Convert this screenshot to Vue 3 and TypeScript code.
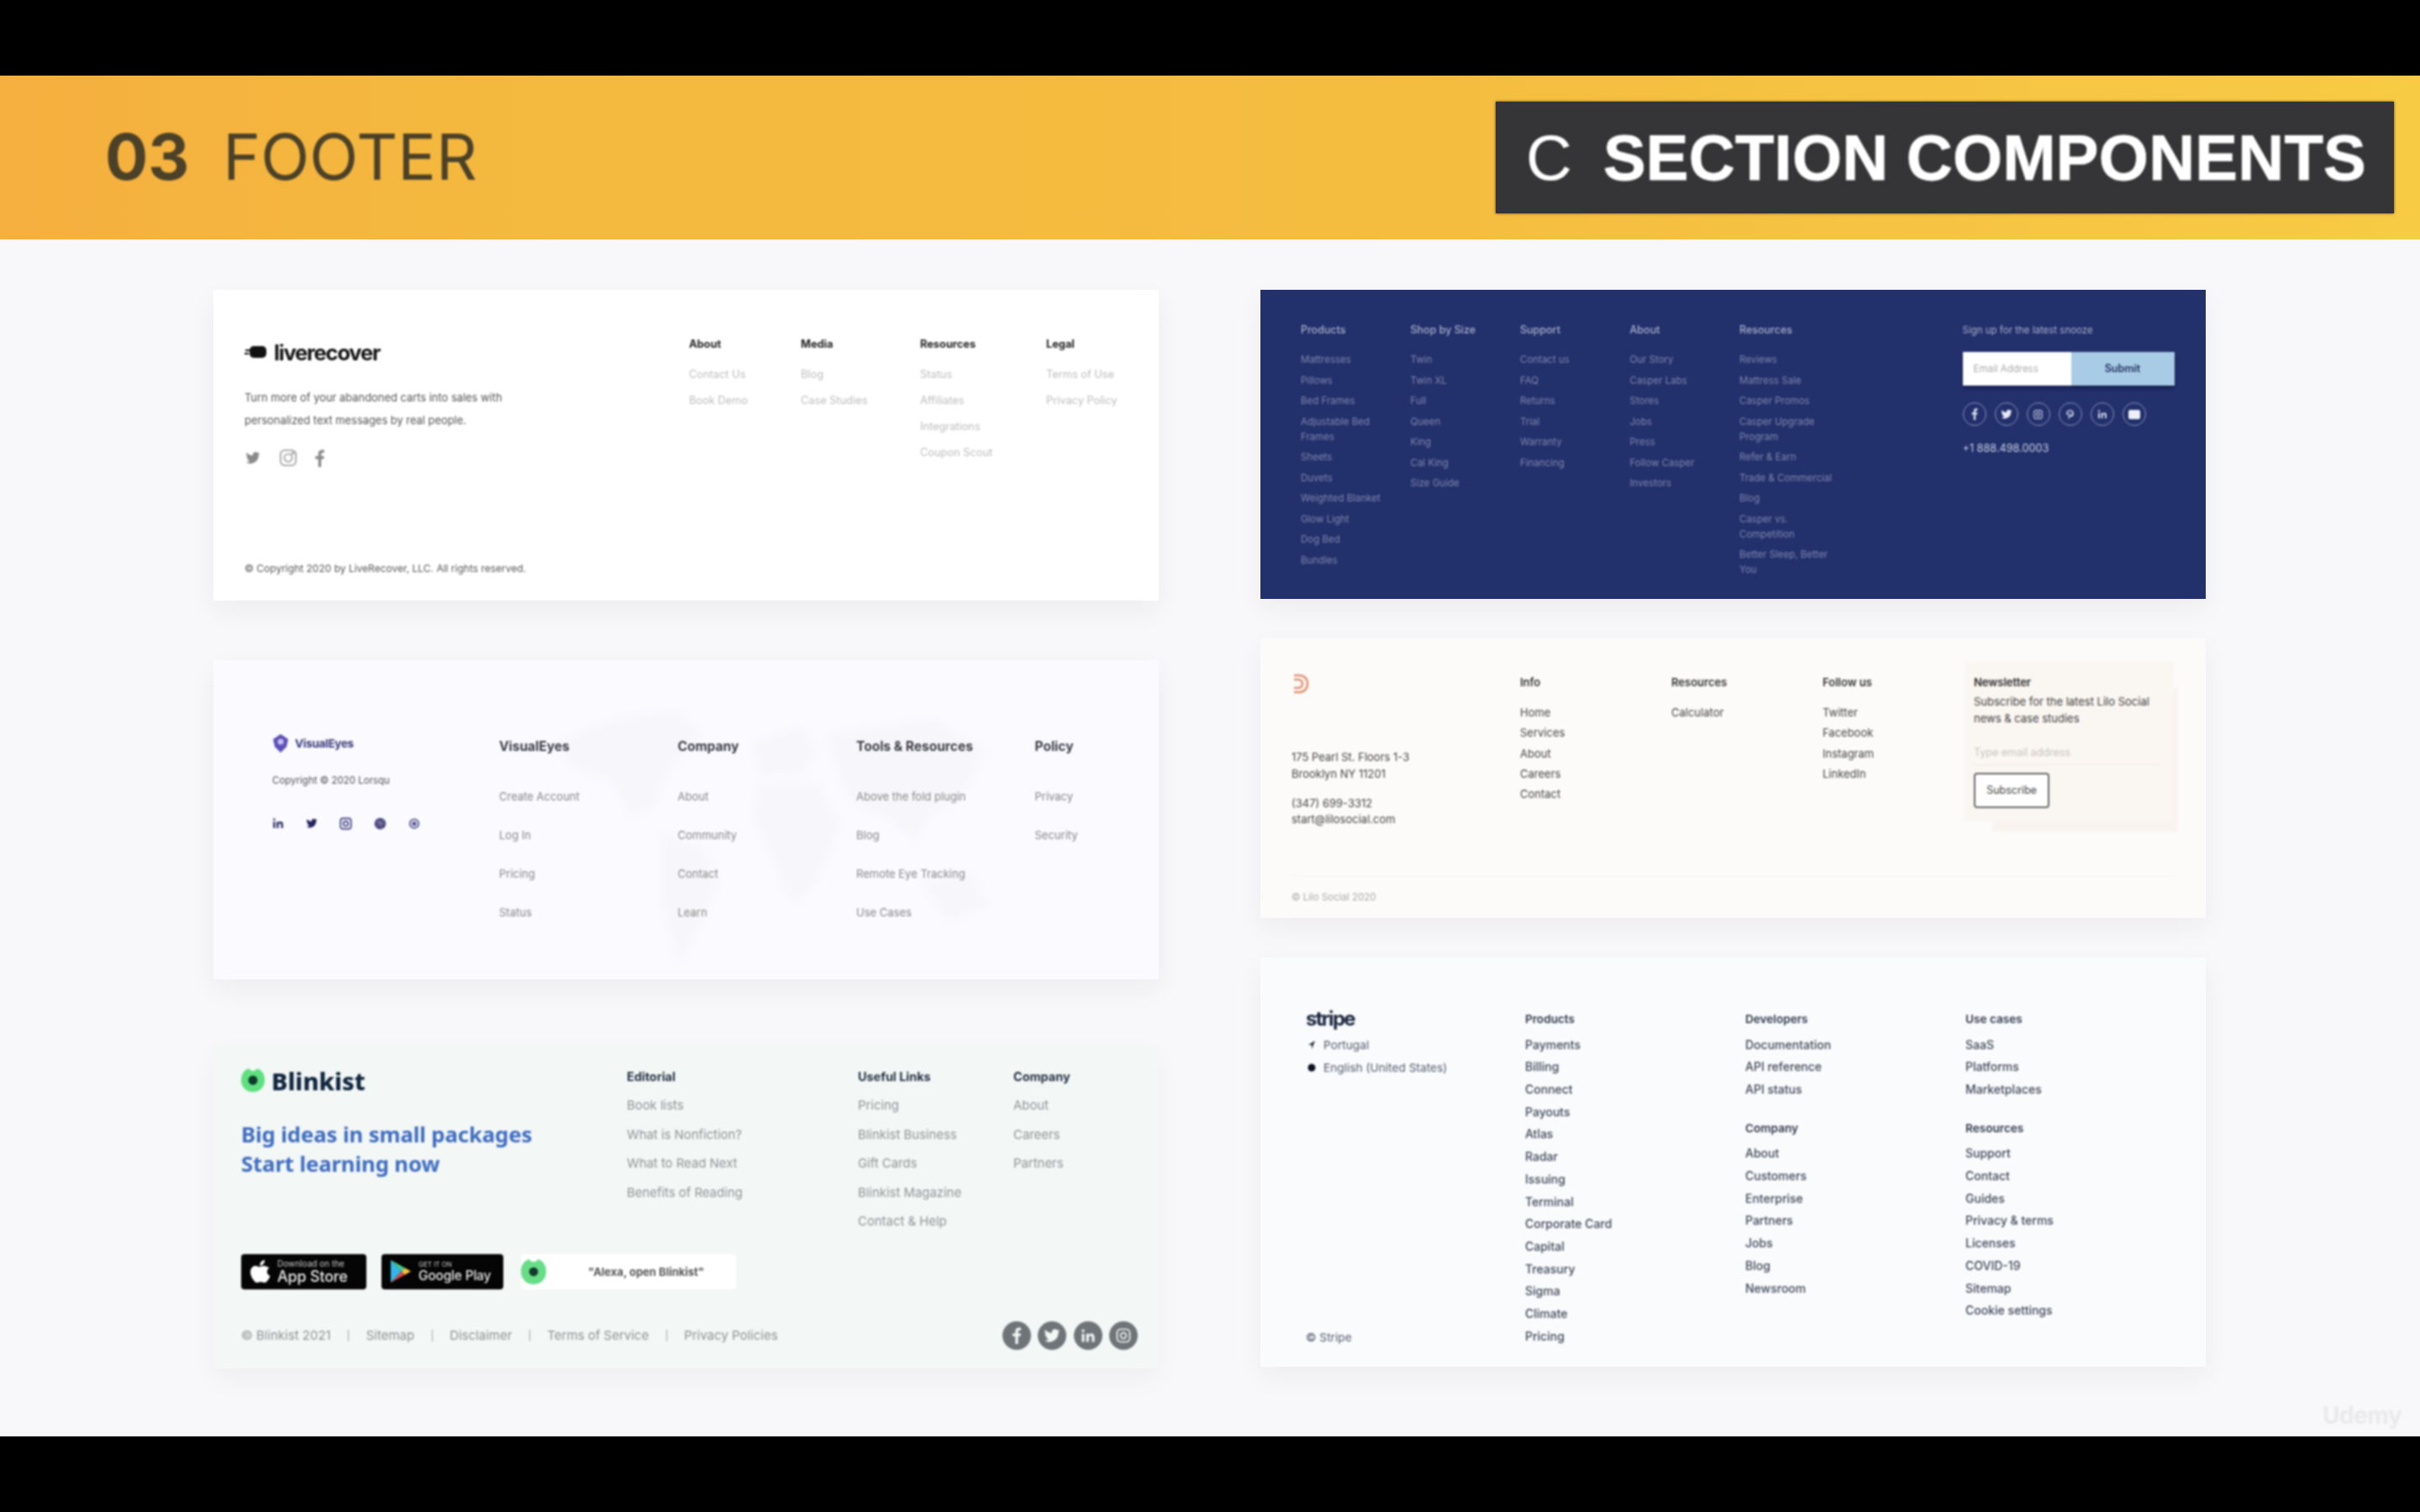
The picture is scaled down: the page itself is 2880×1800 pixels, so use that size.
<script setup lang="ts">
interface Col { title: string; items: string[] }
const c1: Col[] = [
  { title: 'About', items: ['Contact Us', 'Book Demo'] },
  { title: 'Media', items: ['Blog', 'Case Studies'] },
  { title: 'Resources', items: ['Status', 'Affiliates', 'Integrations', 'Coupon Scout'] },
  { title: 'Legal', items: ['Terms of Use', 'Privacy Policy'] },
]
const c2: Col[] = [
  { title: 'VisualEyes', items: ['Create Account', 'Log In', 'Pricing', 'Status'] },
  { title: 'Company', items: ['About', 'Community', 'Contact', 'Learn'] },
  { title: 'Tools & Resources', items: ['Above the fold plugin', 'Blog', 'Remote Eye Tracking', 'Use Cases'] },
  { title: 'Policy', items: ['Privacy', 'Security'] },
]
const c3: Col[] = [
  { title: 'Editorial', items: ['Book lists', 'What is Nonfiction?', 'What to Read Next', 'Benefits of Reading'] },
  { title: 'Useful Links', items: ['Pricing', 'Blinkist Business', 'Gift Cards', 'Blinkist Magazine', 'Contact & Help'] },
  { title: 'Company', items: ['About', 'Careers', 'Partners'] },
]
const legal = ['Sitemap', 'Disclaimer', 'Terms of Service', 'Privacy Policies']
const r1: Col[] = [
  { title: 'Products', items: ['Mattresses', 'Pillows', 'Bed Frames', 'Adjustable Bed\nFrames', 'Sheets', 'Duvets', 'Weighted Blanket', 'Glow Light', 'Dog Bed', 'Bundles'] },
  { title: 'Shop by Size', items: ['Twin', 'Twin XL', 'Full', 'Queen', 'King', 'Cal King', 'Size Guide'] },
  { title: 'Support', items: ['Contact us', 'FAQ', 'Returns', 'Trial', 'Warranty', 'Financing'] },
  { title: 'About', items: ['Our Story', 'Casper Labs', 'Stores', 'Jobs', 'Press', 'Follow Casper', 'Investors'] },
  { title: 'Resources', items: ['Reviews', 'Mattress Sale', 'Casper Promos', 'Casper Upgrade\nProgram', 'Refer & Earn', 'Trade & Commercial', 'Blog', 'Casper vs.\nCompetition', 'Better Sleep, Better\nYou'] },
]
const r2: Col[] = [
  { title: 'Info', items: ['Home', 'Services', 'About', 'Careers', 'Contact'] },
  { title: 'Resources', items: ['Calculator'] },
  { title: 'Follow us', items: ['Twitter', 'Facebook', 'Instagram', 'LinkedIn'] },
]
const s1: Col = { title: 'Products', items: ['Payments', 'Billing', 'Connect', 'Payouts', 'Atlas', 'Radar', 'Issuing', 'Terminal', 'Corporate Card', 'Capital', 'Treasury', 'Sigma', 'Climate', 'Pricing'] }
const s2: Col[] = [
  { title: 'Developers', items: ['Documentation', 'API reference', 'API status'] },
  { title: 'Company', items: ['About', 'Customers', 'Enterprise', 'Partners', 'Jobs', 'Blog', 'Newsroom'] },
]
const s3: Col[] = [
  { title: 'Use cases', items: ['SaaS', 'Platforms', 'Marketplaces'] },
  { title: 'Resources', items: ['Support', 'Contact', 'Guides', 'Privacy & terms', 'Licenses', 'COVID-19', 'Sitemap', 'Cookie settings'] },
]
</script>

<template>
  <div class="stage">
    <div class="bar"></div>
    <header class="banner">
      <div class="heading"><b>03</b><span>FOOTER</span></div>
      <div class="tag"><span class="tag-c">C</span><b>SECTION COMPONENTS</b></div>
    </header>
    <main class="content">
      <section class="column col-left">
        <article class="card a1">
          <div class="row">
            <div class="brand">
              <div class="lr-logo">
                <svg width="28" height="18" viewBox="0 0 28 18"><path d="M1 7h5M0 11h5" stroke="#111" stroke-width="2"/><rect x="6" y="2" width="20" height="14" rx="5" fill="#111"/></svg>
                <span>liverecover</span>
              </div>
              <p class="lr-desc">Turn more of your abandoned carts into sales with<br>personalized text messages by real people.</p>
              <div class="lr-social">
                <svg width="20" height="18" viewBox="0 0 24 24" fill="#8a8a8a"><path d="M23 5c-.8.4-1.7.6-2.6.7.9-.6 1.6-1.4 2-2.5-.9.5-1.9.9-2.9 1.100A4.600 4.600 0 0 0 11.700 8.500 13 13 0 0 1 2.300 3.700a4.600 4.600 0 0 0 1.400 6.100c-.7 0-1.400-.2-2-.6 0 2.200 1.600 4.100 3.700 4.600-.7.200-1.400.2-2.100.1.600 1.800 2.300 3.100 4.300 3.200A9.200 9.200 0 0 1 1 19a13 13 0 0 0 20-11.600c.8-.6 1.500-1.400 2-2.400z"/></svg>
                <svg width="22" height="22" viewBox="0 0 24 24" fill="none" stroke="#a5a5a5" stroke-width="2"><rect x="2" y="2" width="20" height="20" rx="6"/><circle cx="12" cy="12" r="5"/><circle cx="18" cy="6" r="1" fill="#a5a5a5"/></svg>
                <svg width="11" height="21" viewBox="0 0 12 24" fill="#8a8a8a"><path d="M8 24V13h3.500l.5-4H8V6.500C8 5.300 8.400 4.500 10 4.500h2V.800C11.600.700 10.400.600 9.100.600 6.300.600 4 2.300 4 5.800V9H0v4h4v11z"/></svg>
              </div>
            </div>
            <div v-for="c in c1" :key="c.title" class="lr-col">
              <h4>{{ c.title }}</h4>
              <a v-for="i in c.items" :key="i">{{ i }}</a>
            </div>
          </div>
          <p class="lr-copy">© Copyright 2020 by LiveRecover, LLC. All rights reserved.</p>
        </article>

        <article class="card a2">
          <svg class="map" viewBox="0 0 600 340" fill="#f7f7fb"><path d="M40 60l70-30 80-10 30 30-40 40-20 50-30 10-20-40-50-20zM170 170l50 20 20 40-30 70-20 30-20-70zM280 60l60-20 20 30-20 30-50 0zM290 110l70 0 30 50-30 70-30 30-30-70-20-40zM370 50l130-20 70 40-30 50-40 30-20 30-40-30-40-20zM490 230l60-10 20 40-50 20z"/></svg>
          <div class="row">
            <div class="ve-brand">
              <div class="ve-logo">
                <svg width="20" height="24" viewBox="0 0 20 24"><path d="M10 1l9 6-2 9-7 7-7-7-2-9z" fill="#5d50b8"/><circle cx="10" cy="10" r="3.500" fill="#c6c1f0"/></svg>
                <span>VisualEyes</span>
              </div>
              <p>Copyright © 2020 Lorsqu</p>
              <div class="ve-social">
                <svg width="14" height="14" viewBox="0 0 24 24" fill="#2a2860"><path d="M2 9h4v13H2zM4 2a2.300 2.300 0 1 1 0 4.600A2.300 2.300 0 0 1 4 2zM9 9h4v2c1-1.500 2.400-2.300 4.200-2.300 3.400 0 4.800 2.200 4.800 6V22h-4v-6.500c0-2-.6-3.200-2.200-3.200-1.900 0-2.800 1.300-2.800 3.400V22H9z"/></svg>
                <svg width="14" height="14" viewBox="0 0 24 24" fill="#26245e"><path d="M23 5c-.8.4-1.700.6-2.600.7.900-.6 1.600-1.400 2-2.500-.9.500-1.900.9-2.900 1.100A4.600 4.600 0 0 0 11.700 8.500 13 13 0 0 1 2.300 3.700a4.600 4.600 0 0 0 1.400 6.100c-.7 0-1.400-.2-2-.6 0 2.200 1.600 4.100 3.700 4.600-.7.200-1.400.2-2.100.1.600 1.800 2.300 3.100 4.300 3.200A9.200 9.200 0 0 1 1 19a13 13 0 0 0 20-11.600c.8-.6 1.500-1.400 2-2.400z"/></svg>
                <svg width="15" height="15" viewBox="0 0 24 24" fill="none" stroke="#55528f" stroke-width="3"><rect x="2" y="2" width="20" height="20" rx="5"/><circle cx="12" cy="12" r="4.500"/></svg>
                <svg width="15" height="15" viewBox="0 0 24 24"><circle cx="12" cy="12" r="11" fill="#46437f"/><path d="M8 4c3 4 6 11 7 17M3 10c6 0 13-1 17-5M4 18c4-5 11-7 18-5" stroke="#bbb" stroke-width="1" fill="none"/></svg>
                <svg width="14" height="15" viewBox="0 0 24 24" fill="none" stroke="#55528f" stroke-width="3"><circle cx="12" cy="12" r="9"/><circle cx="12" cy="12" r="3" fill="#55528f"/></svg>
              </div>
            </div>
            <div v-for="c in c2" :key="c.title" class="ve-col">
              <h4>{{ c.title }}</h4>
              <a v-for="i in c.items" :key="i">{{ i }}</a>
            </div>
          </div>
        </article>

        <article class="card a3">
          <div class="row">
            <div class="bl-brand">
              <div class="bl-logo">
                <svg width="28" height="30" viewBox="0 0 28 30"><path d="M14 4c-2 0-3.500-1-5-3C3 3 0 8 0 15c0 8 6 14 14 14s14-6 14-14c0-7-3-12-9-14-1.500 2-3 3-5 3z" fill="#5ee07f"/><circle cx="14" cy="15" r="5.500" fill="#0f3a2c"/></svg>
                <span>Blinkist</span>
              </div>
              <p class="bl-head">Big ideas in small packages<br>Start learning now</p>
            </div>
            <div v-for="c in c3" :key="c.title" class="bl-col">
              <h4>{{ c.title }}</h4>
              <a v-for="i in c.items" :key="i">{{ i }}</a>
            </div>
          </div>
          <div class="badges">
            <div class="store apple">
              <svg width="24" height="28" viewBox="0 0 24 28" fill="#fff"><path d="M17 0c.2 2-.6 3.600-1.600 4.800-1 1.200-2.600 2.100-4.100 2-.2-1.800.6-3.500 1.500-4.600C13.900 1 15.600.1 17 0zM22.400 9.500C20.800 10.500 19.800 12 19.800 14c0 2.300 1.300 4 3.700 5-.7 2-1.600 3.700-2.800 5.300-1.100 1.500-2.300 2.700-4 2.700-1.700 0-2.400-1-4.400-1s-2.800 1-4.300 1c-1.700 0-3-1.300-4.200-3C1.400 21.300 0 17.700 0 14.300 0 9.700 3 7 6.100 7c1.800 0 3.300 1.200 4.500 1.200 1.100 0 2.800-1.300 4.900-1.300 2.800 0 5.200 1.200 6.900 2.600z"/></svg>
              <div><small>Download on the</small><b>App Store</b></div>
            </div>
            <div class="store play">
              <svg width="26" height="29" viewBox="0 0 26 29"><path d="M1 1v27l13-13.500z" fill="#33b6e8"/><path d="M1 1l13 13.500 4-4z" fill="#4bd08a"/><path d="M1 28l13-13.500 4 4z" fill="#e4463e"/><path d="M18 10.500l7 4-7 4-4-4z" fill="#f7c63e"/></svg>
              <div><small>GET IT ON</small><b>Google Play</b></div>
            </div>
            <div class="alexa">
              <svg width="30" height="34" viewBox="0 0 28 30"><path d="M14 4c-2 0-3.500-1-5-3C3 3 0 8 0 15c0 8 6 14 14 14s14-6 14-14c0-7-3-12-9-14-1.500 2-3 3-5 3z" fill="#68dd88"/><circle cx="14" cy="15" r="5" fill="#12392c"/></svg>
              <span>"Alexa, open Blinkist"</span>
            </div>
          </div>
          <div class="bl-foot">
            <span class="bl-legal">© Blinkist 2021</span>
            <template v-for="l in legal" :key="l">
              <i class="sep"></i><span class="bl-legal">{{ l }}</span>
            </template>
            <div class="bl-social">
              <span class="round">
                <svg width="20" height="20" viewBox="0 0 12 24" fill="#f3f7f5"><path d="M8 24V13h3.500l.5-4H8V6.500C8 5.300 8.400 4.500 10 4.500h2V.8C11.600.700 10.400.600 9.100.600 6.300.600 4 2.300 4 5.800V9H0v4h4v11z"/></svg>
              </span>
              <span class="round">
                <svg width="20" height="20" viewBox="0 0 24 24" fill="#f3f7f5"><path d="M23 5c-.8.4-1.700.6-2.600.7.900-.6 1.600-1.400 2-2.500-.9.500-1.900.9-2.900 1.100A4.600 4.600 0 0 0 11.700 8.500 13 13 0 0 1 2.300 3.700a4.600 4.600 0 0 0 1.400 6.100c-.7 0-1.400-.2-2-.6 0 2.200 1.600 4.100 3.700 4.600-.7.200-1.400.2-2.100.1.600 1.800 2.300 3.100 4.300 3.200A9.200 9.200 0 0 1 1 19a13 13 0 0 0 20-11.600c.8-.6 1.500-1.400 2-2.400z"/></svg>
              </span>
              <span class="round">
                <svg width="18" height="18" viewBox="0 0 24 24" fill="#f3f7f5"><path d="M2 9h4v13H2zM4 2a2.300 2.300 0 1 1 0 4.600A2.300 2.300 0 0 1 4 2zM9 9h4v2c1-1.500 2.400-2.300 4.200-2.300 3.400 0 4.800 2.200 4.800 6V22h-4v-6.500c0-2-.6-3.200-2.200-3.200-1.900 0-2.800 1.300-2.800 3.400V22H9z"/></svg>
              </span>
              <span class="round">
                <svg width="20" height="20" viewBox="0 0 24 24" fill="none" stroke="#f3f7f5" stroke-width="2"><rect x="3" y="3" width="18" height="18" rx="5"/><circle cx="12" cy="12" r="4"/></svg>
              </span>
            </div>
          </div>
        </article>
      </section>

      <section class="column col-right">
        <article class="card b1">
          <div class="row">
            <div v-for="c in r1" :key="c.title" class="cs-col">
              <h4>{{ c.title }}</h4>
              <a v-for="i in c.items" :key="i">{{ i }}</a>
            </div>
            <div class="cs-sign">
              <h4>Sign up for the latest snooze</h4>
              <div class="cs-form">
                <span class="cs-input">Email Address</span>
                <span class="cs-btn">Submit</span>
              </div>
              <div class="cs-social">
                <span><svg width="12" height="14" viewBox="0 0 12 24" fill="#dfe3f2"><path d="M8 24V13h3.500l.5-4H8V6.500C8 5.300 8.400 4.500 10 4.500h2V.8C11.600.7 10.400.6 9.100.6 6.300.6 4 2.300 4 5.800V9H0v4h4v11z"/></svg></span>
                <span><svg width="14" height="14" viewBox="0 0 24 24" fill="#e8ebf6"><path d="M23 5c-.8.4-1.700.6-2.600.7.900-.6 1.600-1.400 2-2.500-.9.500-1.900.9-2.900 1.100A4.600 4.600 0 0 0 11.700 8.500 13 13 0 0 1 2.300 3.700a4.600 4.600 0 0 0 1.400 6.100c-.7 0-1.400-.2-2-.6 0 2.200 1.600 4.100 3.700 4.600-.7.200-1.400.2-2.100.1.600 1.800 2.300 3.100 4.300 3.200A9.200 9.200 0 0 1 1 19a13 13 0 0 0 20-11.600c.8-.6 1.500-1.400 2-2.400z"/></svg></span>
                <span><svg width="13" height="13" viewBox="0 0 24 24" fill="none" stroke="#c5cbe2" stroke-width="2"><rect x="3" y="3" width="18" height="18" rx="5"/><circle cx="12" cy="12" r="4"/></svg></span>
                <span><svg width="13" height="13" viewBox="0 0 24 24" fill="#d3d8ea"><path d="M12 2C7 2 4 5.500 4 9c0 2 1 4 3 5l1-3c-1-1-1-2-1-2 0-3 2-5 5-5s4.500 2 4.500 4.500S15 14 13 14c-1 0-2-1-1.700-2l1-4h-2.300L8 21h2.500l1.200-5c.5.500 1.500 1 2.800 1 3.500 0 5.500-3.500 5.500-7.500C20 5 16.500 2 12 2z"/></svg></span>
                <span><svg width="12" height="12" viewBox="0 0 24 24" fill="#d3d8ea"><path d="M2 9h4v13H2zM4 2a2.300 2.300 0 1 1 0 4.600A2.300 2.300 0 0 1 4 2zM9 9h4v2c1-1.500 2.400-2.300 4.200-2.300 3.400 0 4.800 2.200 4.800 6V22h-4v-6.500c0-2-.6-3.200-2.200-3.200-1.900 0-2.800 1.300-2.800 3.400V22H9z"/></svg></span>
                <span><svg width="14" height="11" viewBox="0 0 14 11"><rect width="14" height="11" rx="2" fill="#eef0f8"/></svg></span>
              </div>
              <p class="cs-phone">+1 888.498.0003</p>
            </div>
          </div>
        </article>

        <article class="card b2">
          <div class="row">
            <div class="ls-brand">
              <svg width="24" height="24" viewBox="0 0 24 24" fill="none" stroke="#e39170" stroke-width="2.500"><path d="M3 2h6c6 0 10 4 10 10s-4 10-10 10H3M3 7h5c3 0 5 2 5 5s-2 5-5 5H3"/></svg>
              <p class="ls-addr">175 Pearl St. Floors 1-3<br>Brooklyn NY 11201</p>
              <p class="ls-addr ls-contact">(347) 699-3312<br>start@lilosocial.com</p>
            </div>
            <div v-for="c in r2" :key="c.title" class="ls-col">
              <h4>{{ c.title }}</h4>
              <a v-for="i in c.items" :key="i">{{ i }}</a>
            </div>
            <div class="ls-news">
              <i class="ls-shape back"></i>
              <i class="ls-shape front"></i>
              <h4>Newsletter</h4>
              <p>Subscribe for the latest Lilo Social<br>news &amp; case studies</p>
              <span class="ls-input">Type email address</span>
              <span class="ls-btn">Subscribe</span>
            </div>
          </div>
          <p class="ls-copy">© Lilo Social 2020</p>
        </article>

        <article class="card b3">
          <div class="st-left">
            <div class="st-logo">stripe</div>
            <div class="st-lang">
              <svg width="10" height="12" viewBox="0 0 10 12" fill="#1a2238"><path d="M9 1L1 6h4v5z"/></svg>
              <span>Portugal</span>
            </div>
            <div class="st-lang">
              <svg width="10" height="12" viewBox="0 0 10 12" fill="#0b1020"><circle cx="5" cy="6" r="4.500"/></svg>
              <span>English (United States)</span>
            </div>
            <div class="st-copy">© Stripe</div>
          </div>
          <div class="st-col">
            <h4>{{ s1.title }}</h4>
            <a v-for="i in s1.items" :key="i">{{ i }}</a>
          </div>
          <div class="st-col">
            <div v-for="c in s2" :key="c.title" class="st-group">
              <h4>{{ c.title }}</h4>
              <a v-for="i in c.items" :key="i">{{ i }}</a>
            </div>
          </div>
          <div class="st-col">
            <div v-for="c in s3" :key="c.title" class="st-group">
              <h4>{{ c.title }}</h4>
              <a v-for="i in c.items" :key="i">{{ i }}</a>
            </div>
          </div>
        </article>
      </section>
      <div class="mark">Udemy</div>
    </main>
    <div class="bar"></div>
  </div>
</template>

<style>
html, body { margin: 0; background: #000; }
</style>

<style scoped>
* { box-sizing: border-box; }
h4, p { margin: 0; font-weight: inherit; }
a { display: block; }
.stage { width: 2880px; height: 1800px; display: flex; flex-direction: column; font-family: Inter, "Liberation Sans", sans-serif; overflow: hidden; background: #000; }
.bar { height: 90px; flex: none; background: #000; }
.banner { height: 195px; flex: none; display: flex; align-items: center; justify-content: space-between; padding: 0 31px 0 125px; background: linear-gradient(90deg, #f5af3e 0%, #f4b83f 18%, #f4bd40 60%, #f8cb44 100%); }
.heading { display: flex; gap: 40px; font-size: 76px; line-height: 1; color: #4b4129; margin-top: -4px; filter: blur(1.2px); }
.heading b { font-weight: 700; }
.tag { width: 1069px; height: 133px; background: #353436; color: #fff; display: flex; align-items: center; gap: 37px; padding-left: 36px; font-family: "Liberation Sans", Arial, sans-serif; font-size: 76px; box-shadow: 0 0 3px rgba(50, 30, 0, .8); }
.tag b { letter-spacing: .25px; filter: blur(.9px); -webkit-text-stroke: .8px #fff; }
.tag-c { font-weight: 400; filter: blur(.9px); }
.content { position: relative; height: 1425px; flex: none; background: #f8f8fa; padding: 60px 0 0 254px; display: flex; gap: 121px; }
.column { width: 1125px; display: flex; flex-direction: column; }
.col-left { gap: 71px; }
.col-right { gap: 47px; }
.card { position: relative; width: 1125px; flex: none; display: flex; flex-direction: column; box-shadow: 0 12px 30px rgba(30, 30, 50, .05); }
.row { display: flex; position: relative; }
.row > * { flex: none; }
.card > * { filter: blur(1px); }

.a1 { height: 370px; background: #fff; padding: 55px 0 29px 37px; }
.brand { width: 529px; }
.lr-logo { height: 38px; display: flex; align-items: center; gap: 7px; font-size: 25.5px; font-weight: 700; letter-spacing: -1.2px; color: #111; }
.lr-desc { margin-top: 22px; font-size: 12.9px; line-height: 27px; color: #555; white-space: nowrap; }
.lr-social { margin-top: 20px; height: 22px; display: flex; align-items: center; gap: 21px; }
.lr-col { font-size: 12.8px; line-height: 31px; color: #bbb; }
.lr-col:nth-of-type(2) { width: 133px; }
.lr-col:nth-of-type(3) { width: 142px; }
.lr-col:nth-of-type(4) { width: 150px; }
.lr-col h4 { font-weight: 700; color: #222; line-height: 20px; margin-bottom: 10px; }
.lr-copy { margin-top: auto; font-size: 12px; line-height: 18px; color: #555; white-space: nowrap; }

.a2 { height: 380px; background: #fafaff; padding: 86px 0 0 70px; }
.a2 > .map { position: absolute; left: 340px; top: 40px; width: 640px; height: 330px; filter: blur(5px); }
.ve-brand { width: 270px; }
.ve-logo { height: 26px; display: flex; align-items: center; gap: 7px; font-size: 13.5px; font-weight: 700; letter-spacing: -.3px; color: #3d3a78; }
.ve-brand p { margin-top: 21px; font-size: 11.5px; line-height: 20px; color: #555; white-space: nowrap; }
.ve-social { margin-top: 31px; height: 20px; display: flex; align-items: center; gap: 26px; }
.ve-col { width: 212.5px; font-size: 13px; line-height: 46px; color: #888; white-space: nowrap; }
.ve-col h4 { font-size: 15.5px; font-weight: 700; color: #3c3c46; line-height: 34px; margin-bottom: 19px; white-space: nowrap; }

.a3 { height: 386px; margin-top: 6px; background: #f3f7f5; padding: 27px 0 0 33px; box-shadow: 0 14px 30px rgba(30, 30, 50, .04); }
.bl-brand { width: 459px; }
.bl-logo { height: 32px; display: flex; align-items: center; gap: 8px; font-family: "Noto Sans", sans-serif; font-size: 29px; font-weight: 800; color: #10243f; }
.bl-head { margin-top: 31px; font-family: "Noto Sans", sans-serif; font-size: 25.7px; line-height: 35px; font-weight: 700; color: #3e6cc2; white-space: nowrap; letter-spacing: -.1px; }
.bl-col { width: 275px; font-size: 14.9px; line-height: 34.5px; color: #909496; white-space: nowrap; }
.bl-col + .bl-col { width: 185px; }
.bl-col h4 { font-size: 14.4px; font-weight: 700; color: #243044; line-height: 24px; margin-bottom: 5px; }
.badges { display: flex; gap: 18px; margin-top: 21px; height: 42px; position: relative; }
.store { background: #050505; border-radius: 4px; height: 42px; display: flex; align-items: center; gap: 8px; padding-left: 11px; color: #e8e8e8; width: 149px; }
.play { width: 145px; padding-left: 10px; }
.store div { display: flex; flex-direction: column; line-height: 1; }
.store small { font-size: 10px; color: #ccc; white-space: nowrap; }
.store b { font-size: 18px; font-weight: 500; margin-top: 2px; letter-spacing: -.2px; white-space: nowrap; }
.play b { font-size: 15.5px; }
.play small { font-size: 8px; }
.alexa { margin-left: 3px; width: 256px; height: 42px; background: #fff; border-radius: 3px; display: flex; align-items: center; font-size: 13px; font-weight: 700; color: #555; }
.alexa span { margin-left: 50px; white-space: nowrap; }
.bl-foot { display: flex; align-items: center; height: 34px; margin-top: 38px; padding-right: 25px; }
.bl-legal { font-size: 15px; color: #8f9294; white-space: nowrap; }
.sep { width: 1px; height: 14px; background: #a5a8aa; margin: 0 20.5px; }
.bl-social { margin-left: auto; display: flex; gap: 8.5px; }
.round { width: 34px; height: 34px; border-radius: 50%; background: #6f7478; display: flex; align-items: center; justify-content: center; }

.b1 { height: 368px; background: #22306c; padding: 37px 0 0 48px; box-shadow: 0 12px 30px rgba(30, 30, 50, .05); }
.cs-col { width: 130.5px; font-size: 11.5px; line-height: 18px; color: #8088ad; white-space: pre-line; }
.cs-col h4 { font-size: 12.5px; color: #aab1cc; line-height: 22px; margin-bottom: 15px; font-weight: 500; white-space: nowrap; }
.cs-col a { margin-bottom: 6.5px; }
.cs-sign { margin-left: 135px; width: 252px; }
.cs-sign h4 { font-size: 11.5px; line-height: 22px; color: #aab1cc; white-space: nowrap; }
.cs-form { margin-top: 15px; height: 40px; display: flex; box-shadow: 0 3px 4px rgba(0, 0, 20, .35); }
.cs-input { width: 129px; background: #fff; color: #a9a9a9; font-size: 11.5px; line-height: 40px; padding-left: 13px; }
.cs-btn { width: 123px; background: #a8cce6; color: #1d2c5c; font-size: 12.5px; font-weight: 600; line-height: 40px; text-align: center; }
.cs-social { margin-top: 20px; display: flex; gap: 10px; }
.cs-social span { width: 28px; height: 28px; border-radius: 50%; border: 1px solid #8c95bb; display: flex; align-items: center; justify-content: center; }
.cs-phone { margin-top: 17px; font-size: 12.7px; line-height: 20px; color: #cdd2e4; }

.b2 { height: 333px; background: #fcfbfa; padding: 42px 35px 16px 37px; }
.ls-brand { width: 272px; color: #333; }
.ls-brand svg { display: block; margin-bottom: 66px; }
.ls-addr { font-size: 13px; line-height: 19.5px; color: #444; white-space: nowrap; }
.ls-contact { margin-top: 15.5px; }
.ls-col { width: 180px; font-size: 13px; line-height: 24.4px; color: #444; }
.ls-col h4 { font-weight: 600; line-height: 20px; margin-bottom: 13.8px; color: #333; }
.ls-news { position: relative; width: 224px; font-size: 13px; color: #444; }
.ls-news > *:not(i) { position: relative; }
.ls-news h4 { font-weight: 600; line-height: 20px; color: #333; }
.ls-news p { margin-top: 3px; line-height: 20px; white-space: nowrap; }
.ls-shape { position: absolute; }
.ls-shape.back { left: 22px; right: -19px; top: 16px; height: 172px; background: #f9f4ef; }
.ls-shape.front { left: -11px; right: -13px; top: -14px; height: 189px; background: #faf6f2; }
.ls-input { display: block; margin-top: 21px; height: 25px; line-height: 20px; color: #c9c5c0; border-bottom: 1px solid #f1ece7; font-size: 12.5px; }
.ls-btn { display: block; margin-top: 9px; width: 90px; height: 42px; border: 2px solid #6a6a6a; border-radius: 4px; background: #fff; line-height: 38px; text-align: center; font-size: 12.5px; }
.ls-copy { margin-top: auto; border-top: 1px solid #f6f4f1; padding-top: 16px; font-size: 11.5px; line-height: 18px; color: #aaa; }

.b3 { height: 487px; background: #fafbfc; padding: 60px 0 22.5px 54px; flex-direction: row; }
.st-left { width: 261px; flex: none; display: flex; flex-direction: column; font-size: 13.7px; color: #555b6e; }
.st-logo { height: 26px; line-height: 26px; margin-bottom: 4.6px; font-size: 24px; font-weight: 700; letter-spacing: -1.7px; color: #1b2740; }
.st-lang { height: 26.7px; display: flex; align-items: center; gap: 9px; white-space: nowrap; }
.st-lang svg { margin-left: 2px; }
.st-copy { margin-top: auto; line-height: 26px; }
.st-col { width: 262px; flex: none; font-size: 14px; line-height: 26.7px; color: #3f4658; font-weight: 500; white-space: nowrap; }
.st-col h4 { line-height: 26px; margin-bottom: 4.6px; font-size: 13.6px; font-weight: 600; color: #30374b; }
.st-group + .st-group { margin-top: 19px; }

.mark { position: absolute; left: 2764px; top: 1383px; font-size: 28px; font-weight: 700; color: #e9e9ec; filter: blur(1.3px); letter-spacing: -.5px; }
</style>
